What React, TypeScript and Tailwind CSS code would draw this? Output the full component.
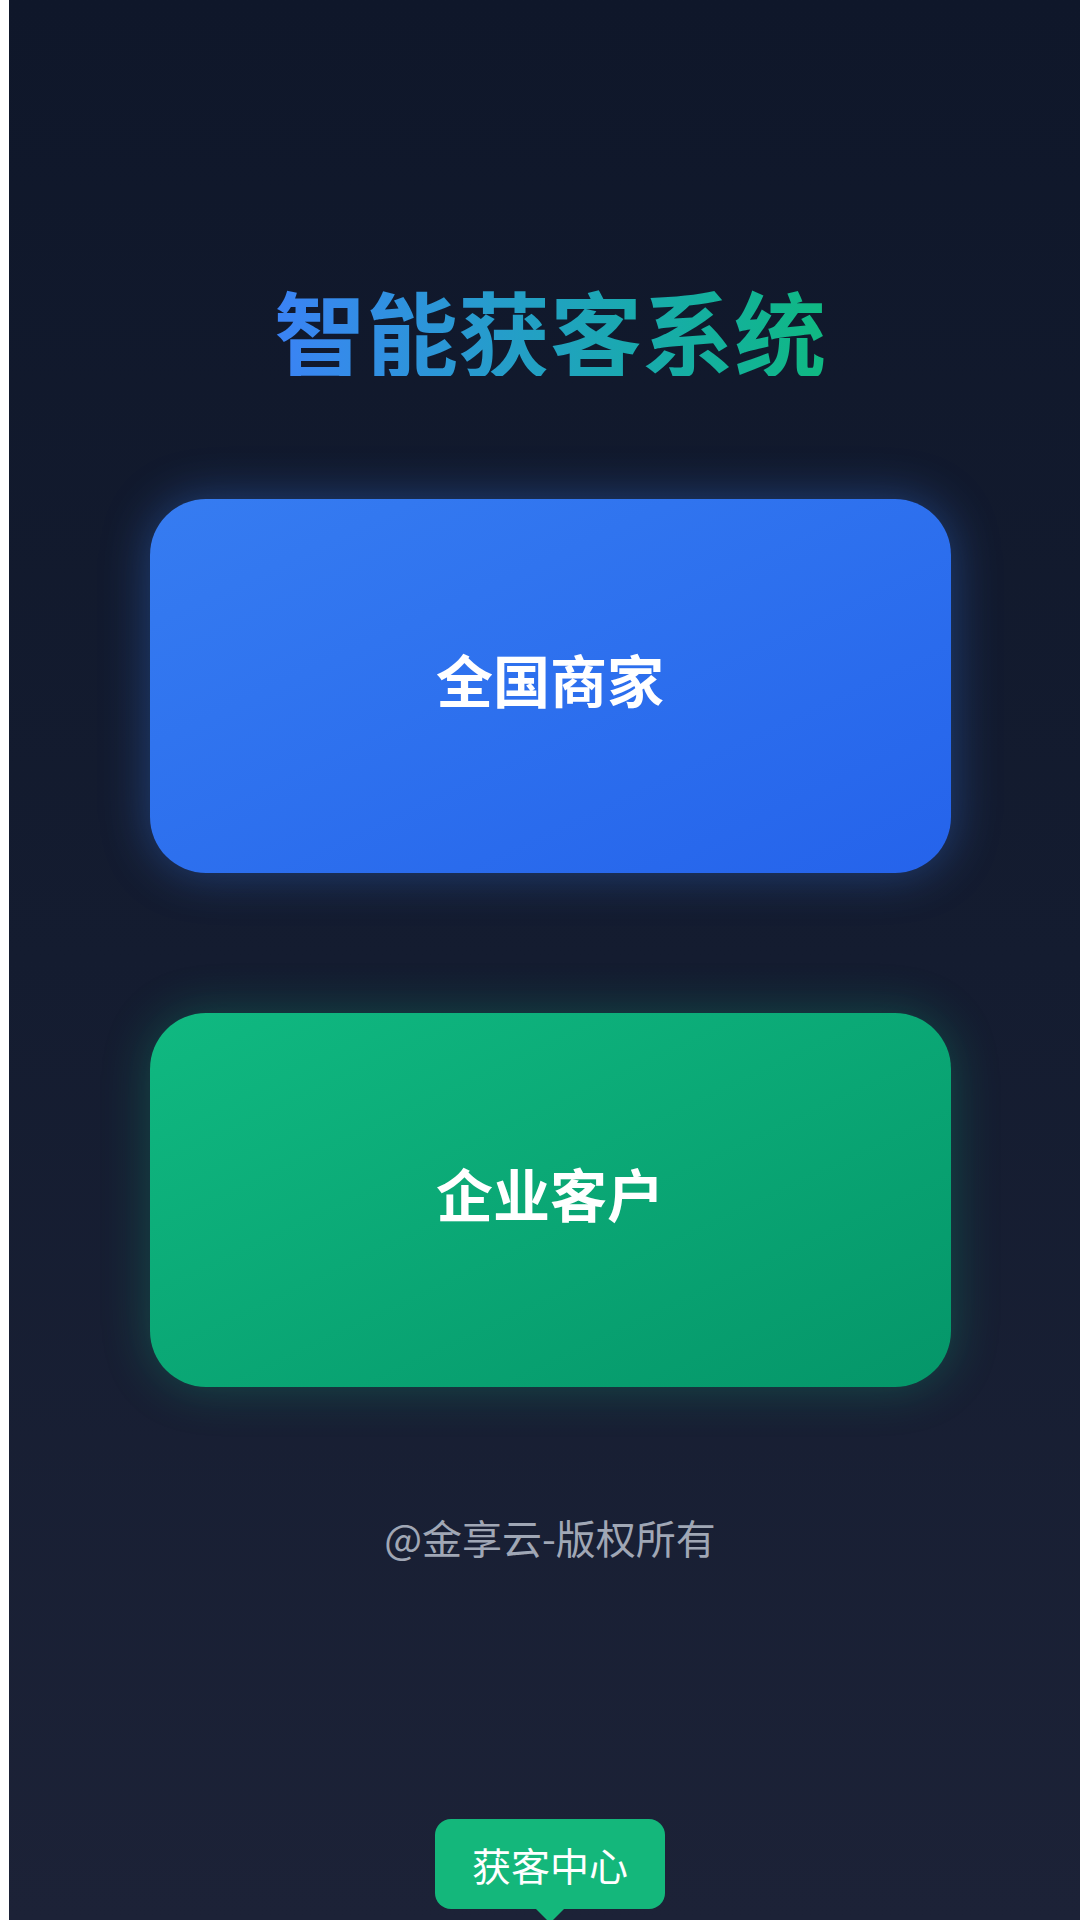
const CJK = "font-['Noto_Sans_CJK_SC','Noto_Sans',sans-serif]"

function EntryCard({ label, tone }: { label: string; tone: 'blue' | 'green' }) {
  const toneClass =
    tone === 'blue'
      ? 'from-[#367cf1] to-[#2563eb] shadow-[0_0_48px_rgba(59,130,246,0.38)]'
      : 'from-[#10b981] to-[#059669] shadow-[0_0_48px_rgba(16,185,129,0.3)]'
  return (
    <button
      className={`w-[801px] h-[374px] rounded-[56px] bg-linear-to-br ${toneClass} flex items-center justify-center pb-[16px]`}
    >
      <span className="text-white text-[57px] font-bold leading-none">{label}</span>
    </button>
  )
}

export default function App() {
  return (
    <div className={`flex min-h-[1920px] w-full ${CJK}`}>
      {/* left white strip */}
      <div className="w-[9px] bg-white shrink-0" />

      <main className="flex-1 h-[1920px] overflow-hidden bg-linear-to-b from-[#0f172a] via-[#141c30] to-[#1c2237] flex flex-col items-center pl-[11px] pt-[284px]">
        <h1 className="text-[92px] font-bold leading-none bg-linear-to-r from-[#3b82f6] to-[#10b981] bg-clip-text text-transparent">
          智能获客系统
        </h1>

        <div className="mt-[123px] flex flex-col gap-[140px]">
          <EntryCard label="全国商家" tone="blue" />
          <EntryCard label="企业客户" tone="green" />
        </div>

        <p className="mt-[130px] text-[40px] leading-none text-[#a0a7b5]">@金享云-版权所有</p>

        {/* bottom tab tooltip */}
        <div className="mt-[262px] flex flex-col items-center">
          <div className="w-[230px] h-[90px] rounded-[16px] bg-[#14b77b] flex items-center justify-center">
            <span className="text-white text-[39px] leading-none">获客中心</span>
          </div>
          <div className="w-0 h-0 border-l-[14px] border-r-[14px] border-t-[14px] border-l-transparent border-r-transparent border-t-[#14b77b]" />
        </div>
      </main>
    </div>
  )
}
